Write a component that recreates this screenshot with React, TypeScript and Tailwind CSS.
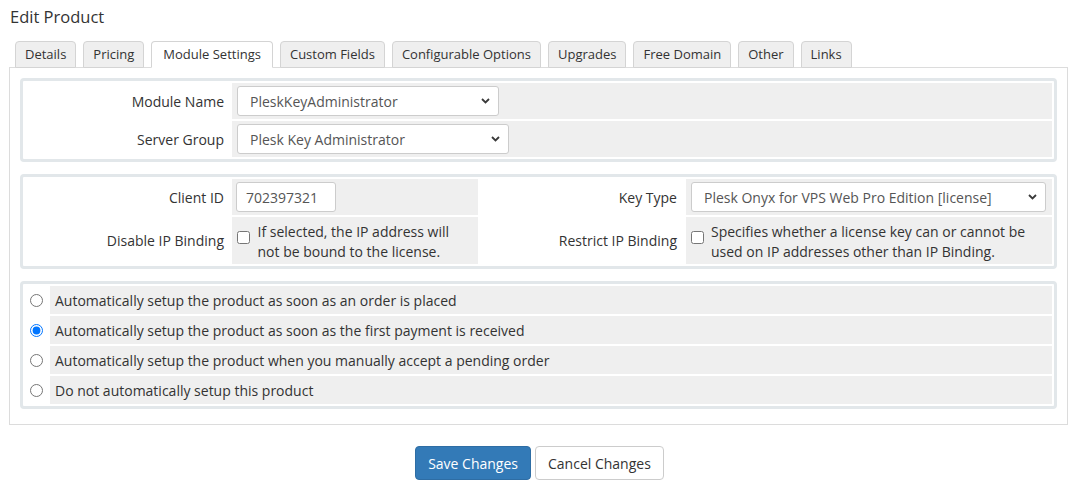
import React from "react";

const Chevron = () => (
  <svg
    className="pointer-events-none absolute right-[9px] top-1/2 -translate-y-1/2"
    width="9"
    height="6"
    viewBox="0 0 9 6"
  >
    <polyline points="1,1 4.5,4.5 8,1" fill="none" stroke="#3a3a3a" strokeWidth="1.8" />
  </svg>
);

function Select({ value, width }: { value: string; width: string }) {
  return (
    <div className={`relative ${width} h-[30px]`}>
      <select
        defaultValue={value}
        className="appearance-none w-full h-full border border-[#ccc] rounded-[3px] bg-white pl-[12px] pr-[24px] text-[14px] text-[#555] outline-none"
      >
        <option>{value}</option>
      </select>
      <Chevron />
    </div>
  );
}

const tabs = [
  "Details",
  "Pricing",
  "Module Settings",
  "Custom Fields",
  "Configurable Options",
  "Upgrades",
  "Free Domain",
  "Other",
  "Links",
];

const radios = [
  "Automatically setup the product as soon as an order is placed",
  "Automatically setup the product as soon as the first payment is received",
  "Automatically setup the product when you manually accept a pending order",
  "Do not automatically setup this product",
];

export default function App() {
  return (
    <div className="w-[1079px] min-h-[489px] bg-white font-['Open_Sans',sans-serif] text-[14px] text-[#333]">
      <div className="pl-[9px] pr-[11px] pt-[4px]">
        <h1 className="text-[16.5px] leading-[26px] font-normal ml-[1px]">Edit Product</h1>

        <div className="flex mt-[11px] pl-[6px] gap-[7px]">
          {tabs.map((t) => {
            const active = t === "Module Settings";
            return (
              <div
                key={t}
                className={
                  active
                    ? "relative z-10 -mb-px h-[27px] flex items-center px-[11px] border border-[#d4d4d4] border-b-white bg-white rounded-t-[4px] text-[13px] text-[#333]"
                    : "relative -mb-px h-[27px] flex items-center px-[9px] border border-[#d4d4d4] bg-[#efefef] rounded-t-[4px] text-[13px] text-[#333]"
                }
              >
                {t}
              </div>
            );
          })}
        </div>

        <div className="border border-[#dcdcdc] px-[10px] pt-[10px] pb-[15px] flex flex-col gap-[12px]">
          {/* Panel 1 */}
          <div className="border-[3px] border-[#e2e7ea] rounded-[4px] p-[2px] grid grid-cols-[205px_1fr] gap-[2px]">
            <div className="h-[36px] flex items-center justify-end pr-[6px]">Module Name</div>
            <div className="h-[36px] bg-[#efefef] flex items-center pl-[5px]">
              <Select value="PleskKeyAdministrator" width="w-[262px]" />
            </div>
            <div className="h-[36px] flex items-center justify-end pr-[6px]">Server Group</div>
            <div className="h-[36px] bg-[#efefef] flex items-center pl-[5px]">
              <Select value="Plesk Key Administrator" width="w-[272px]" />
            </div>
          </div>

          {/* Panel 2 */}
          <div className="border-[3px] border-[#e2e7ea] rounded-[4px] p-[2px] grid grid-cols-[205px_246px_204px_1fr] grid-rows-[36px_47px] gap-[2px]">
            <div className="flex items-center justify-end pr-[6px]">Client ID</div>
            <div className="bg-[#efefef] flex items-center pl-[4px]">
              <input
                type="text"
                defaultValue="702397321"
                className="w-[100px] h-[30px] border border-[#ccc] rounded-[3px] bg-white pl-[9px] text-[14px] text-[#555] outline-none"
              />
            </div>
            <div className="flex items-center justify-end pr-[7px]">Key Type</div>
            <div className="bg-[#efefef] flex items-center pl-[5px]">
              <Select value="Plesk Onyx for VPS Web Pro Edition [license]" width="w-[355px]" />
            </div>

            <div className="flex items-center justify-end pr-[6px]">Disable IP Binding</div>
            <div className="bg-[#efefef] flex items-start pl-[4.5px] pt-[5px]">
              <input type="checkbox" className="mt-[8.5px] w-[13px] h-[13px] shrink-0" />
              <span className="ml-[8px] leading-[20px]">
                If selected, the IP address will
                <br />
                not be bound to the license.
              </span>
            </div>
            <div className="flex items-center justify-end pr-[7px]">Restrict IP Binding</div>
            <div className="bg-[#efefef] flex items-start pl-[5px] pt-[5px]">
              <input type="checkbox" className="mt-[8.5px] w-[13px] h-[13px] shrink-0" />
              <span className="ml-[7px] leading-[20px]">
                Specifies whether a license key can or cannot be
                <br />
                used on IP addresses other than IP Binding.
              </span>
            </div>
          </div>

          {/* Panel 3 */}
          <div className="border-[3px] border-[#e2e7ea] rounded-[4px] p-[2px] grid grid-cols-[23px_1fr] gap-[2px]">
            {radios.map((r, i) => (
              <React.Fragment key={r}>
                <div className="h-[28px] flex items-center justify-center">
                  <input
                    type="radio"
                    name="autosetup"
                    defaultChecked={i === 1}
                    className="w-[13px] h-[13px]"
                  />
                </div>
                <div className="h-[28px] bg-[#efefef] flex items-center pl-[5px]">{r}</div>
              </React.Fragment>
            ))}
          </div>
        </div>

        <div className="flex justify-center gap-[4px] mt-[21px] ml-[2px]">
          <button className="h-[34px] px-[12px] rounded-[4px] bg-[#337ab7] border border-[#2e6da4] text-white text-[14px]">
            Save Changes
          </button>
          <button className="h-[34px] px-[12px] rounded-[4px] bg-white border border-[#ccc] text-[#333] text-[14px]">
            Cancel Changes
          </button>
        </div>
      </div>
    </div>
  );
}
